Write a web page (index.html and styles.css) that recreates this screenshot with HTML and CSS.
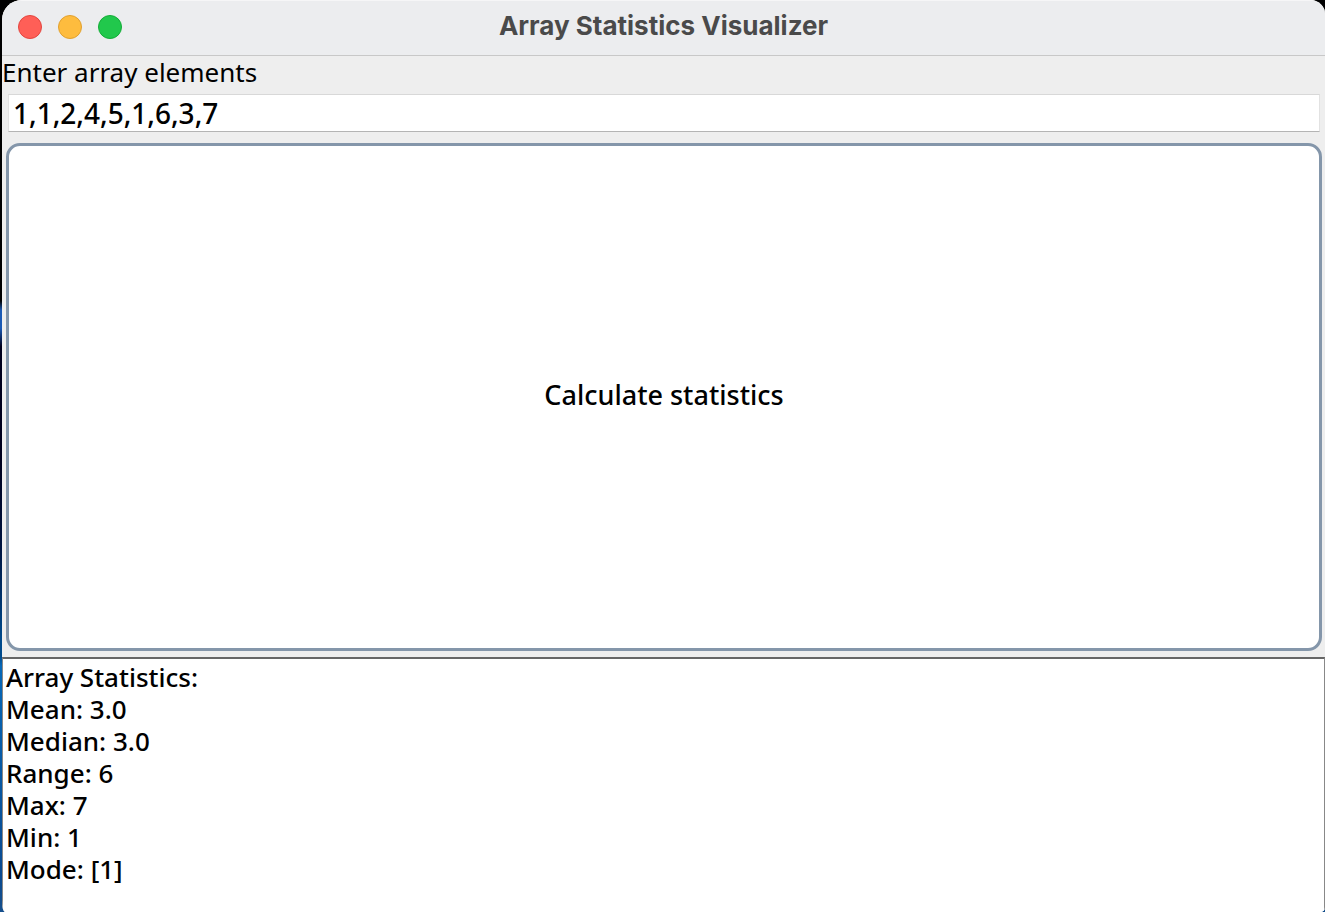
FILE: index.html
```html
<!DOCTYPE html>
<html lang="en">
<head>
<meta charset="utf-8">
<title>Array Statistics Visualizer</title>
<link rel="stylesheet" href="styles.css">
</head>
<body>
<main class="window">
  <header class="titlebar">
    <div class="controls">
      <button class="control close" type="button" aria-label="Close"></button>
      <button class="control minimize" type="button" aria-label="Minimize"></button>
      <button class="control zoom" type="button" aria-label="Zoom"></button>
    </div>
    <h1 class="title">Array Statistics Visualizer</h1>
  </header>
  <form class="content">
    <label class="label" for="elements">Enter array elements</label>
    <input class="field" id="elements" type="text" value="1,1,2,4,5,1,6,3,7">
    <button class="calculate" type="button">Calculate statistics</button>
    <textarea class="results" aria-label="Results" rows="7" readonly>Array Statistics:
Mean: 3.0
Median: 3.0
Range: 6
Max: 7
Min: 1
Mode: [1]</textarea>
  </form>
</main>
</body>
</html>
```
FILE: styles.css
```css
* {
  box-sizing: border-box;
}

body {
  margin: 0;
  height: 100vh;
  padding-left: 2px;
  overflow: hidden;
  background: linear-gradient(#000 0 33%, #1c5ab4 34% 36%, #00001c 38% 50%, #001440 60%, #004a8c 70% 72%, #0768b8 73%, #0a4a90 96%, #164f8c);
}

.window {
  display: flex;
  flex-direction: column;
  height: 100%;
  overflow: hidden;
  background: #eee;
  border-radius: 20px 15px 4px 3px / 20px 14px 5px 12px;
}

.titlebar {
  display: grid;
  grid-template-columns: 1fr auto 1fr;
  align-items: center;
  height: 56px;
  flex: none;
  padding: 0 16px 1px;
  background: #ecedef;
  border-bottom: 1px solid #c8c8c8;
  box-shadow: inset 0 1px #f6f6f7;
}

.controls {
  display: flex;
  gap: 16px;
}

.control {
  width: 24px;
  height: 24px;
  padding: 0;
  border: 1px solid #e2463f;
  border-radius: 50%;
  background: #ff5f57;
}

.minimize {
  border-color: #e0a030;
  background: #febc3e;
}

.zoom {
  border-color: #14ac38;
  background: #21c84c;
}

.title {
  margin: 0;
  padding-bottom: 2px;
  color: #4a4a4a;
  font: 700 26px/32px Inter, sans-serif;
}

.content {
  display: flex;
  flex: 1;
  flex-direction: column;
  min-height: 0;
}

.label,
.field,
.calculate,
.results {
  color: #000;
  font: 500 26px/32px "Noto Sans", "Open Sans", sans-serif;
}

.label {
  font-weight: 400;
}

.field {
  height: 38px;
  margin: 6px 5px 11px 6px;
  padding: 0 4px;
  border: 1px solid #e2e2e2;
  border-top-color: #d8d8d8;
  border-bottom: 1px solid #b4b4b4;
  background: #fff;
  font-size: 28px;
  outline: 0;
}

.calculate {
  flex: 1;
  margin: 0 3px 6px 4px;
  padding: 0 0 4px;
  border: 3px solid #8496aa;
  border-radius: 14px;
  background: #fff;
  font-size: 27px;
}

.results {
  height: 255px;
  padding: 2px 3px;
  border: 1px solid #888;
  border-top: 2px solid #666;
  border-bottom: 0;
  background: #fff;
  resize: none;
  outline: 0;
}
```
